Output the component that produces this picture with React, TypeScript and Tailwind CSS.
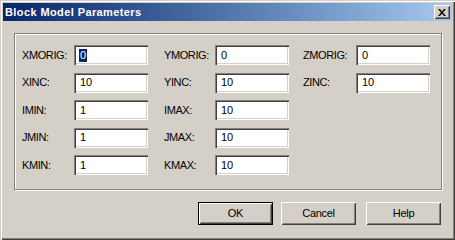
import React from "react";

const FONT = { fontFamily: '"Liberation Sans", Arial, sans-serif' };

type Field = { label: string; value: string; selected?: boolean } | null;

const ROWS: Field[][] = [
  [
    { label: "XMORIG:", value: "0", selected: true },
    { label: "YMORIG:", value: "0" },
    { label: "ZMORIG:", value: "0" },
  ],
  [
    { label: "XINC:", value: "10" },
    { label: "YINC:", value: "10" },
    { label: "ZINC:", value: "10" },
  ],
  [{ label: "IMIN:", value: "1" }, { label: "IMAX:", value: "10" }, null],
  [{ label: "JMIN:", value: "1" }, { label: "JMAX:", value: "10" }, null],
  [{ label: "KMIN:", value: "1" }, { label: "KMAX:", value: "10" }, null],
];

// label cell widths + left padding per column
const LABEL_CELLS = ["w-[59px] pl-[7px]", "w-[67px] pl-[16px]", "w-[67px] pl-[14px]"];

const TextBox = ({ value, selected }: { value: string; selected?: boolean }) => (
  <div className="w-[74px] h-[20px] bg-white flex items-center pl-[4px] text-[11px] text-black shadow-[inset_1px_1px_#808080,inset_2px_2px_#404040,inset_-1px_-1px_#ffffff,inset_-2px_-2px_#d4d0c8]">
    {selected ? (
      <span className="h-[13px] flex items-center bg-[#0a246a] text-white px-[1px] ml-[1px] outline outline-1 outline-dotted outline-[#ffffff]">
        {value}
      </span>
    ) : (
      <span className="pl-[2px]">{value}</span>
    )}
  </div>
);

const Button = ({ label, isDefault }: { label: string; isDefault?: boolean }) => (
  <div
    className={`w-[75px] h-[23px] flex items-center justify-center text-[11px] tracking-[-0.3px] text-black bg-[#d4d0c8] ${
      isDefault
        ? "shadow-[inset_0_0_0_1px_#000000,inset_2px_2px_#ffffff,inset_-2px_-2px_#404040,inset_3px_3px_#d4d0c8,inset_-3px_-3px_#808080]"
        : "shadow-[inset_1px_1px_#ffffff,inset_-1px_-1px_#404040,inset_2px_2px_#d4d0c8,inset_-2px_-2px_#808080]"
    }`}
  >
    {label}
  </div>
);

export default function App() {
  return (
    <div
      className="w-[455px] h-[240px] bg-[#d4d0c8] flex flex-col p-[3px] shadow-[inset_1px_1px_#d4d0c8,inset_2px_2px_#ffffff,inset_-1px_-1px_#404040,inset_-2px_-2px_#808080]"
      style={FONT}
    >
      {/* title bar */}
      <div className="h-[18px] flex items-center justify-between bg-gradient-to-r from-[#0a246a] to-[#a6caf0] pl-[2px] pr-[2px]">
        <span className="text-white font-bold text-[11px] tracking-[0.4px]">Block Model Parameters</span>
        <div className="w-[16px] h-[14px] bg-[#d4d0c8] flex items-center justify-center shadow-[inset_1px_1px_#ffffff,inset_-1px_-1px_#404040,inset_2px_2px_#d4d0c8,inset_-2px_-2px_#808080]">
          <svg width="8" height="7" viewBox="0 0 8 7">
            <path d="M0 0h2l2 2.5L6 0h2L5 3.5 8 7H6L4 4.5 2 7H0l3-3.5z" fill="#000" />
          </svg>
        </div>
      </div>

      {/* group box */}
      <div className="mt-[12px] ml-[11px] w-[428px] h-[157px] border border-[#808080] shadow-[inset_1px_1px_#ffffff,1px_1px_#ffffff] pt-[11px] flex flex-col gap-[7.5px]">
        {ROWS.map((row, r) => (
          <div key={r} className="flex h-[20px]">
            {row.map((f, c) =>
              f ? (
                <React.Fragment key={c}>
                  <div className={`${LABEL_CELLS[c]} flex items-center text-[11px] tracking-[-0.4px] text-black`}>
                    {f.label}
                  </div>
                  <TextBox value={f.value} selected={f.selected} />
                </React.Fragment>
              ) : null,
            )}
          </div>
        ))}
      </div>

      {/* buttons */}
      <div className="mt-[12px] flex pl-[195px]">
        <Button label="OK" isDefault />
        <div className="w-[8px]" />
        <Button label="Cancel" />
        <div className="w-[10px]" />
        <Button label="Help" />
      </div>
    </div>
  );
}
